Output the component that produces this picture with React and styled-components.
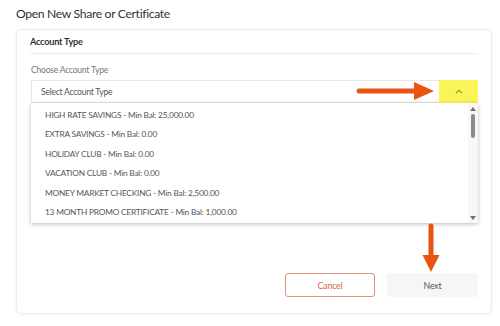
import React from "react";
import styled, { createGlobalStyle } from "styled-components";

const Global = createGlobalStyle`
  html, body { margin: 0; padding: 0; background: #fff; }
  body { font-family: "Lato", "Open Sans", sans-serif; color: #333; }
`;

const Page = styled.div`
  position: relative;
  width: 500px;
  height: 326px;
  padding: 6px 8px 0 16px;
  box-sizing: border-box;
`;

const Title = styled.h1`
  margin: 0;
  font-size: 12.2px;
  line-height: 16px;
  font-weight: 400;
  letter-spacing: -0.35px;
  color: #333;
`;

const Card = styled.div`
  margin-top: 7px;
  width: 476px;
  height: 285px;
  box-sizing: border-box;
  border: 1px solid #ebebeb;
  border-radius: 6px;
  box-shadow: 0 1px 3px rgba(0, 0, 0, 0.06);
  padding: 0 13px 16px 14px;
  display: flex;
  flex-direction: column;
`;

const SectionHeader = styled.div`
  font-size: 9.2px;
  font-weight: 700;
  line-height: 12px;
  letter-spacing: -0.25px;
  color: #333;
  padding: 6px 0 5px;
  border-bottom: 1px solid #ececec;
  margin-left: -1px;
`;

const Label = styled.div`
  font-size: 8.6px;
  line-height: 12px;
  letter-spacing: -0.25px;
  color: #777;
  margin-top: 10px;
`;

const Field = styled.div`
  position: relative;
  margin-top: 4px;
`;

const SelectBox = styled.div`
  height: 23px;
  box-sizing: border-box;
  border: 1px solid #e6e6e6;
  border-right: none;
  display: flex;
  align-items: center;
  font-size: 8.6px;
  letter-spacing: -0.25px;
  color: #555;
`;

const SelectText = styled.span`
  flex: 1;
  padding-left: 9px;
`;

const Toggle = styled.div`
  width: 39px;
  height: 23px;
  margin-top: -1px;
  margin-bottom: -1px;
  background: #fbf459;
  display: flex;
  align-items: center;
  justify-content: center;
`;

const Dropdown = styled.ul`
  position: absolute;
  top: 23px;
  left: 0;
  right: 0;
  margin: 0;
  padding: 2px 0 1px;
  list-style: none;
  background: #fff;
  box-shadow: 0 1px 4px rgba(0, 0, 0, 0.28);
  z-index: 2;
`;

const Option = styled.li`
  height: 19.5px;
  display: flex;
  align-items: center;
  padding-left: 14px;
  font-size: 8.3px;
  letter-spacing: -0.2px;
  color: #555;
  white-space: nowrap;
`;

const Scrollbar = styled.div`
  position: absolute;
  top: 0;
  right: 0;
  bottom: 0;
  width: 10px;
  background: #f7f7f7;
  display: flex;
  flex-direction: column;
  align-items: center;
`;

const ScrollArrow = styled.div`
  width: 0;
  height: 0;
  border-left: 3px solid transparent;
  border-right: 3px solid transparent;
  ${(p) =>
    p.$down
      ? "border-top: 4px solid #707070; margin-top: auto; margin-bottom: 3px;"
      : "border-bottom: 4px solid #707070; margin-top: 4px;"}
`;

const Thumb = styled.div`
  width: 4px;
  height: 24px;
  margin-top: 3px;
  border-radius: 2px;
  background: #8a8a8a;
`;

const Footer = styled.div`
  margin-top: auto;
  display: flex;
  justify-content: flex-end;
  gap: 12px;
`;

const Button = styled.button`
  width: ${(p) => (p.$outline ? "90px" : "91px")};
  height: 24px;
  box-sizing: border-box;
  border-radius: 3px;
  font-family: inherit;
  font-size: 8.8px;
  letter-spacing: -0.2px;
  cursor: pointer;
  border: ${(p) => (p.$outline ? "1px solid #e6907a" : "none")};
  background: ${(p) => (p.$outline ? "#fff" : "#f6f6f6")};
  color: ${(p) => (p.$outline ? "#d8613f" : "#555")};
`;

const Annotation = styled.svg`
  position: absolute;
  left: ${(p) => p.$x}px;
  top: ${(p) => p.$y}px;
  overflow: visible;
  z-index: 3;
`;

const options = [
  "HIGH RATE SAVINGS - Min Bal: 25,000.00",
  "EXTRA SAVINGS - Min Bal: 0.00",
  "HOLIDAY CLUB - Min Bal: 0.00",
  "VACATION CLUB - Min Bal: 0.00",
  "MONEY MARKET CHECKING - Min Bal: 2,500.00",
  "13 MONTH PROMO CERTIFICATE - Min Bal: 1,000.00",
];

export default function App() {
  return (
    <Page>
      <Global />
      <Title>Open New Share or Certificate</Title>
      <Card>
        <SectionHeader>Account Type</SectionHeader>
        <Label>Choose Account Type</Label>
        <Field>
          <SelectBox>
            <SelectText>Select Account Type</SelectText>
            <Toggle>
              <svg width="8" height="5" viewBox="0 0 8 5">
                <path d="M1 4.2 L4 1.2 L7 4.2" fill="none" stroke="#6b9a3c" strokeWidth="1.1" />
              </svg>
            </Toggle>
          </SelectBox>
          <Dropdown>
            {options.map((o) => (
              <Option key={o}>{o}</Option>
            ))}
            <Scrollbar>
              <ScrollArrow />
              <Thumb />
              <ScrollArrow $down />
            </Scrollbar>
          </Dropdown>
        </Field>
        <Footer>
          <Button $outline>Cancel</Button>
          <Button>Next</Button>
        </Footer>
      </Card>
      <Annotation $x={356} $y={81} width="80" height="20" viewBox="0 0 80 20">
        <line x1="3" y1="10" x2="60" y2="10" stroke="#ea5413" strokeWidth="5" strokeLinecap="round" />
        <path d="M58 1 L78 10 L58 19 Z" fill="#ea5413" />
      </Annotation>
      <Annotation $x={422} $y={223} width="18" height="50" viewBox="0 0 18 50">
        <line x1="9" y1="3" x2="9" y2="34" stroke="#ea5413" strokeWidth="5" strokeLinecap="round" />
        <path d="M0.5 32 L17.5 32 L9 49 Z" fill="#ea5413" />
      </Annotation>
    </Page>
  );
}
